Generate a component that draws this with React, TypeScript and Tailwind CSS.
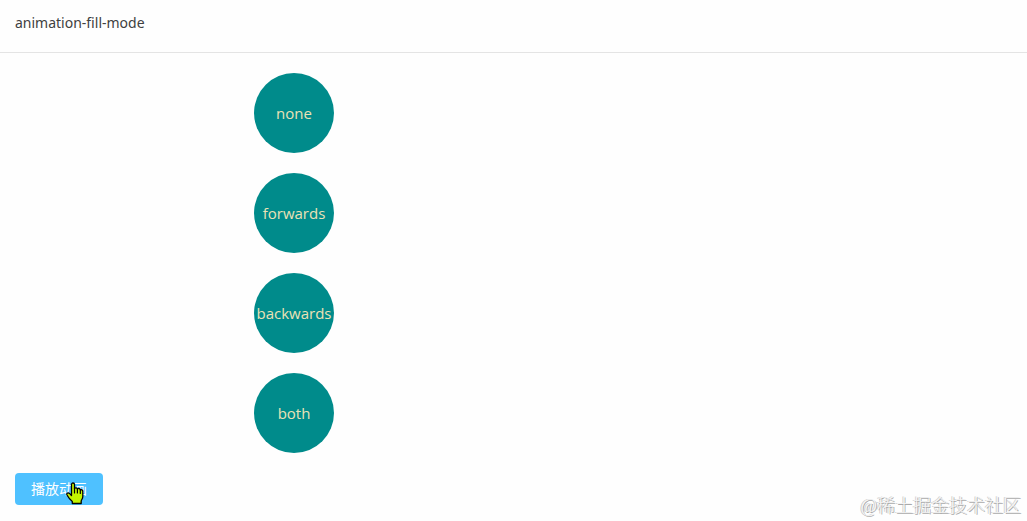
import { useState } from 'react';

const fillModes = ['none', 'forwards', 'backwards', 'both'];

const HandCursor = () => (
  <svg
    className="absolute left-[51px] top-[9px] h-[23px] w-[18px] pointer-events-none"
    viewBox="0 0 18 23"
    aria-hidden="true"
  >
    <path
      d="M5.5 2.5C5.5 .5 8.5 .5 8.5 2.5V6.5C9.2 5.4 11.2 5.7 11.4 7C12.2 6 14.2 6.4 14.3 7.8C15.4 7.2 16.8 8 16.8 9.3V14.5C16.8 17 15.2 18 15.2 19V21.5H6.3V19.5C4.3 18 2.4 15.5 1 13C.2 11.4 2 10.2 3.4 11.4L5.5 13.5Z"
      fill="#c4f500"
      stroke="#000"
      strokeWidth="1.3"
      strokeLinejoin="round"
    />
    <path d="M8.5 6V11M11.4 7V11M14.3 8V11.5" stroke="#000" strokeWidth="1.2" strokeLinecap="round" />
  </svg>
);

export default function App() {
  const [run, setRun] = useState(0);

  return (
    <div className="relative min-h-screen bg-[#fefefe] font-['Noto_Sans','Noto_Sans_CJK_SC',sans-serif]">
      <header className="border-b border-[#e4e4e4] px-[15px] pt-[13px] pb-[19px]">
        <h1 className="text-sm leading-5 text-[#404040]">animation-fill-mode</h1>
      </header>

      <main className="px-[15px] py-5">
        <div key={run} className="flex flex-col gap-5 pl-[239px]">
          {fillModes.map((mode) => (
            <div
              key={mode}
              className="flex size-20 items-center justify-center rounded-full bg-[#008b8b] font-['Open_Sans','Noto_Sans',sans-serif] text-[15px] text-[#ebe2b6]"
            >
              {mode}
            </div>
          ))}
        </div>

        <div className="relative mt-5 w-fit">
          <button
            type="button"
            className="block h-8 w-[88px] cursor-pointer rounded bg-[#4fc1ff] text-sm text-white"
            onClick={() => setRun(run + 1)}
          >
            播放动画
          </button>
          <HandCursor />
        </div>
      </main>

      {/* Watermark */}
      <p className="absolute right-[6px] bottom-[7px] font-['Liberation_Serif','Noto_Sans_CJK_SC',sans-serif] text-lg leading-6 font-light text-[#f4f4f4] [text-shadow:1px_1px_0_#aaa,-1px_0_0_#ccc]">
        @稀土掘金技术社区
      </p>
    </div>
  );
}
